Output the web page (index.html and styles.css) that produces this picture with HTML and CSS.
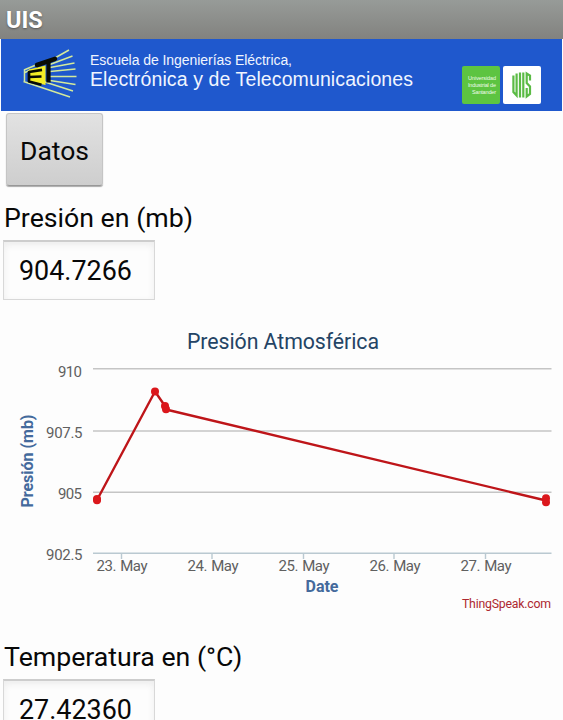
FILE: index.html
```html
<!DOCTYPE html>
<html lang="es">
<head>
<meta charset="utf-8">
<title>UIS</title>
<link rel="stylesheet" href="styles.css">
</head>
<body>
<header class="titlebar">UIS</header>
<section class="banner">
  <svg class="lamp" width="56" height="52" viewBox="22 48 56 52">
    <g stroke="#d3e99c" stroke-width="1.5" fill="none">
      <path d="M54 58.500 69 50M24 70 36 65M50 64.500 72.500 56M50 67.500 74.500 63M50 71.500 75.500 69M50 76.500 76.500 76.500M50 80.500 75.500 84.500M45 82 73 91M23.500 81.500 70 97M24.500 69.500V82M24 73 30 70"/>
    </g>
    <path d="M29 69.500 45.500 65.500V85L28 81Z" fill="#f4ee25"/>
    <g stroke="#080b05" fill="none">
      <path d="M37 65 55 58.800" stroke-width="4.500" stroke-linecap="round"/>
      <path d="M48.500 61V82.500" stroke-width="4.200"/>
      <path d="M42 69.800 29 72V81.500L41.500 84.800" stroke-width="2.700" stroke-linejoin="round"/>
      <path d="M29 77 41.500 76.500" stroke-width="2.500"/>
    </g>
  </svg>
  <div class="school">
    <svg width="330" height="52" viewBox="0 0 330 52">
      <text class="school-small" x="0" y="17" textLength="202">Escuela de Ingenierías Eléctrica,</text>
      <text class="school-large" x="0" y="38" textLength="323">Electrónica y de Telecomunicaciones</text>
    </svg>
  </div>
  <div class="badges">
    <div class="badge green">
      <svg width="38" height="38" viewBox="0 0 38 38">
        <text x="6" y="14" textLength="28">Universidad</text>
        <text x="6" y="21" textLength="28">Industrial de</text>
        <text x="10" y="28" textLength="24">Santander</text>
      </svg>
    </div>
    <div class="badge white">
      <svg width="38" height="38" viewBox="0 0 38 38">
        <g fill="none" stroke="#5bbb45" stroke-width="2.200">
          <path d="M10.400 9.500V26L13.600 29.500V7.500M17 6.500V31.500M20.300 6.500V31.500"/>
          <path d="M27 14.500V9.500L23.700 7.500V17L27 20.500V28L23.700 30.500V22"/>
        </g>
      </svg>
    </div>
  </div>
</section>
<main class="screen">
  <button class="datos">Datos</button>
  <div class="label">Presión en (mb)</div>
  <div class="field">904.7266</div>
  <svg class="chart" width="563" height="325" viewBox="0 310 563 325">
    <text class="chart-title" x="187" y="349" textLength="192">Presión Atmosférica</text>
    <g stroke="#c5c5c5" stroke-width="1.500">
      <path d="M93 368.800H551.500M93 431H551.500M93 492.300H551.500"/>
    </g>
    <path d="M93 553.200H551.500M121.500 553V559M212 553V559M303.500 553V559M394 553V559M485.500 553V559" stroke="#bac9d1" stroke-width="1.400" fill="none"/>
    <g class="tick">
      <text x="58" y="377" textLength="24">910</text>
      <text x="46" y="438" textLength="36.500">907.5</text>
      <text x="58" y="499" textLength="24">905</text>
      <text x="46" y="560" textLength="36.500">902.5</text>
      <text x="96.500" y="571" textLength="51">23. May</text>
      <text x="187.500" y="571" textLength="51">24. May</text>
      <text x="278.500" y="571" textLength="51">25. May</text>
      <text x="369.500" y="571" textLength="51">26. May</text>
      <text x="460.500" y="571" textLength="51">27. May</text>
    </g>
    <text class="axis" x="305.500" y="592" textLength="33">Date</text>
    <text class="axis" transform="translate(32.500 507.500) rotate(-90)" textLength="93">Presión (mb)</text>
    <text class="credit" x="462" y="608" textLength="89">ThingSpeak.com</text>
    <path d="M97 500 155 391.500 165 406 166 409.500 546 500.500" fill="none" stroke="#be1519" stroke-width="2.400" stroke-linejoin="round"/>
    <g fill="#db171c">
      <circle cx="97" cy="499" r="4"/><circle cx="97" cy="500.300" r="4"/>
      <circle cx="155" cy="391.500" r="4"/>
      <circle cx="165" cy="406" r="4"/><circle cx="166" cy="409.300" r="4"/>
      <circle cx="546" cy="498.300" r="4"/><circle cx="546" cy="502.300" r="4"/>
    </g>
  </svg>
  <div class="label second">Temperatura en (°C)</div>
  <div class="field">27.42360</div>
</main>
</body>
</html>
```
FILE: styles.css
```css
* { box-sizing: border-box; }
body {
  margin: 0;
  height: 720px;
  overflow: hidden;
  background: #fdfdfd;
  color: #080808;
  font-family: Roboto, sans-serif;
}
.titlebar {
  height: 39px;
  padding-left: 6px;
  background: linear-gradient(#979b98, #82827f);
  color: #fff;
  font-size: 23.5px;
  font-weight: 700;
  line-height: 40px;
  text-shadow: 0 1px 2px #555;
}
.banner {
  display: flex;
  height: 72px;
  margin: 0 1px;
  padding-top: 9px;
  padding-left: 21px;
  background: #1f58cd;
}
.lamp, .school svg, .badge svg, .chart { display: block; }
.school { margin-left: 12px; width: 330px; }
.school text {
  fill: #f0f5ff;
  font-family: "Liberation Sans", sans-serif;
}
.school-small { font-size: 14px; }
.school-large { font-size: 19.5px; }
.badges {
  display: flex;
  gap: 3px;
  margin-top: 18px;
  margin-left: 42px;
}
.badge { width: 38px; height: 38px; border-radius: 2px; }
.green { background: #5dc441; }
.white { background: #fff; }
.green text {
  fill: #effbe9;
  font: 5.5px "Liberation Sans", sans-serif;
}
.screen { padding-top: 2px; }
.datos {
  display: block;
  width: 97px;
  height: 73px;
  margin-left: 6px;
  padding: 1px 0 0;
  border: 1px solid #c5c5c5;
  border-bottom-color: #989898;
  border-radius: 3px;
  background: linear-gradient(#e2e2e2, #cecece);
  box-shadow: 0 1px 1px #aaa;
  color: #080808;
  font: 26.5px Roboto, sans-serif;
}
.label {
  height: 54px;
  padding-top: 16px;
  padding-left: 4px;
  font-size: 26.7px;
  line-height: 32px;
}
.label.second { height: 44px; padding-top: 6px; }
.field {
  width: 152px;
  height: 60px;
  margin-left: 3px;
  padding-left: 15px;
  border: 1px solid #d8d8d8;
  border-top: 2px solid #cdcdcd;
  background: #fdfdfd;
  box-shadow: inset 0 3px 7px #ececec;
  font-size: 26.9px;
  line-height: 59px;
}
.chart { margin-top: 10px; }
.chart-title { fill: #244465; font-size: 21.3px; }
.tick { fill: #606060; font-size: 15px; word-spacing: 1px; }
.axis { fill: #446a9c; font-size: 16px; font-weight: 700; }
.credit { fill: #ad2830; font-size: 12.3px; }
```
